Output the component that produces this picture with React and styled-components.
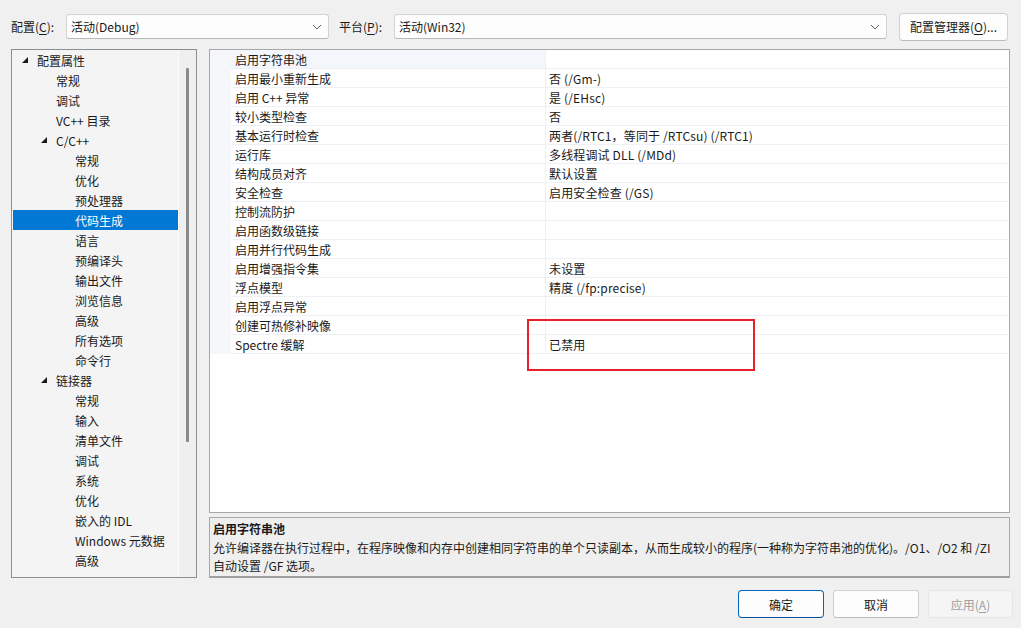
import React from 'react';
import styled, { createGlobalStyle } from 'styled-components';

const GlobalStyle = createGlobalStyle`
  html, body {
    margin: 0;
    padding: 0;
    background: #f0f0f0;
  }
  body {
    font-family: "Noto Sans CJK SC", "Noto Sans", sans-serif;
    font-size: 12px;
    color: #1a1a1a;
  }
`;

const Dialog = styled.div`
  width: 1021px;
  height: 628px;
  background: #f0f0f0;
  display: flex;
  flex-direction: column;
  position: relative;
  overflow: hidden;
`;

const Toolbar = styled.div`
  display: flex;
  align-items: center;
  height: 27px;
  padding: 13px 13px 0 11px;
`;

const Label = styled.span`
  width: ${p => p.width}px;
  margin-left: ${p => p.offset || 0}px;
  flex: none;
  white-space: nowrap;
  u { text-decoration: underline; text-underline-offset: 2px; }
`;

const Combo = styled.div`
  box-sizing: border-box;
  height: 25px;
  width: ${p => (p.width ? `${p.width}px` : 'auto')};
  flex: ${p => (p.width ? 'none' : '1')};
  display: flex;
  align-items: center;
  justify-content: space-between;
  padding: 0 6px 0 4px;
  background: #fdfdfd;
  border: 1px solid #d3d3d3;
  border-bottom-color: #b8b8b8;
  border-radius: 3px;
`;

const Button = styled.button`
  box-sizing: border-box;
  height: 28px;
  width: ${p => p.width}px;
  margin-left: ${p => p.gap || 0}px;
  flex: none;
  font: inherit;
  color: ${p => (p.disabled ? '#a0a0a0' : '#1a1a1a')};
  background: ${p => (p.disabled ? '#f5f5f5' : '#fdfdfd')};
  border: 1px solid ${p => (p.primary ? '#0067c0' : p.disabled ? '#e6e6e6' : '#d0d0d0')};
  border-bottom-color: ${p => (p.primary ? '#0050a0' : p.disabled ? '#e6e6e6' : '#bcbcbc')};
  border-radius: 4px;
  padding: 0;
  u { text-decoration: underline; text-underline-offset: 2px; }
`;

const Main = styled.div`
  display: flex;
  height: 529px;
  margin: 9px 11px 0 11px;
  gap: 12px;
`;

const TreePanel = styled.div`
  box-sizing: border-box;
  width: 186px;
  flex: none;
  display: flex;
  border: 1px solid #8a8f96;
  background: #f4f4f4;
`;

const TreeList = styled.div`
  flex: 1;
  padding-left: 1px;
`;

const TreeRow = styled.div`
  height: 20px;
  display: flex;
  align-items: center;
  padding-left: ${p => 5 + p.level * 19}px;
  background: ${p => (p.selected ? '#0078d4' : 'transparent')};
  color: ${p => (p.selected ? '#ffffff' : '#1a1a1a')};
  white-space: nowrap;
`;

const Toggle = styled.span`
  width: 19px;
  flex: none;
  display: flex;
  align-items: center;
  padding-left: 4px;
  box-sizing: border-box;
`;

const ScrollTrack = styled.div`
  width: 17px;
  flex: none;
  background: #efefef;
  border-left: 1px solid #fafafa;
  display: flex;
  justify-content: center;
  padding-top: 18px;
`;

const ScrollThumb = styled.div`
  width: 3px;
  height: 374px;
  background: #8a8a8a;
  border-radius: 1px;
`;

const RightColumn = styled.div`
  flex: 1;
  display: flex;
  flex-direction: column;
  gap: 4px;
`;

const Grid = styled.div`
  box-sizing: border-box;
  height: 465px;
  border: 1px solid #a8a8a8;
  background: #ffffff;
`;

const PropRow = styled.div`
  display: grid;
  grid-template-columns: 21px 315px 1fr;
  height: 19px;
`;

const Gutter = styled.div`
  background: #f5f7fa;
`;

const NameCell = styled.div`
  padding: 1px 0 0 4px;
  line-height: 17px;
  background: ${p => (p.selected ? '#f3f6fa' : 'transparent')};
  border-right: 1px solid #eef0f4;
  border-bottom: 1px solid #eef0f4;
  white-space: nowrap;
`;

const ValueCell = styled.div`
  padding: 1px 0 0 3px;
  line-height: 17px;
  border-bottom: 1px solid #eef0f4;
  white-space: nowrap;
  letter-spacing: 0.15px;
`;

const Description = styled.div`
  box-sizing: border-box;
  height: 61px;
  border: 1px solid #a8a8a8;
  border-bottom: 2px solid #a0a0a0;
  background: #efefef;
  padding: 2px 3px 0 3px;
  line-height: 18.5px;
`;

const DescTitle = styled.div`
  font-weight: bold;
`;

const Footer = styled.div`
  display: flex;
  justify-content: flex-end;
  margin-top: 12px;
  padding-right: 8px;
`;

const Highlight = styled.div`
  position: absolute;
  left: 527px;
  top: 319px;
  width: 228px;
  height: 52px;
  box-sizing: border-box;
  border: 2px solid #e8202a;
  pointer-events: none;
`;

const Chevron = () => (
  <svg width="10" height="6" viewBox="0 0 10 6">
    <path d="M1 1 L5 5 L9 1" fill="none" stroke="#606060" strokeWidth="1" />
  </svg>
);

const Triangle = () => (
  <svg width="6" height="6" viewBox="0 0 6 6">
    <polygon points="6,0 6,6 0,6" fill="#1a1a1a" />
  </svg>
);

const tree = [
  { label: '配置属性', level: 0, open: true },
  { label: '常规', level: 1 },
  { label: '调试', level: 1 },
  { label: 'VC++ 目录', level: 1 },
  { label: 'C/C++', level: 1, open: true },
  { label: '常规', level: 2 },
  { label: '优化', level: 2 },
  { label: '预处理器', level: 2 },
  { label: '代码生成', level: 2, selected: true },
  { label: '语言', level: 2 },
  { label: '预编译头', level: 2 },
  { label: '输出文件', level: 2 },
  { label: '浏览信息', level: 2 },
  { label: '高级', level: 2 },
  { label: '所有选项', level: 2 },
  { label: '命令行', level: 2 },
  { label: '链接器', level: 1, open: true },
  { label: '常规', level: 2 },
  { label: '输入', level: 2 },
  { label: '清单文件', level: 2 },
  { label: '调试', level: 2 },
  { label: '系统', level: 2 },
  { label: '优化', level: 2 },
  { label: '嵌入的 IDL', level: 2 },
  { label: 'Windows 元数据', level: 2 },
  { label: '高级', level: 2 },
];

const props = [
  ['启用字符串池', ''],
  ['启用最小重新生成', '否 (/Gm-)'],
  ['启用 C++ 异常', '是 (/EHsc)'],
  ['较小类型检查', '否'],
  ['基本运行时检查', '两者(/RTC1，等同于 /RTCsu) (/RTC1)'],
  ['运行库', '多线程调试 DLL (/MDd)'],
  ['结构成员对齐', '默认设置'],
  ['安全检查', '启用安全检查 (/GS)'],
  ['控制流防护', ''],
  ['启用函数级链接', ''],
  ['启用并行代码生成', ''],
  ['启用增强指令集', '未设置'],
  ['浮点模型', '精度 (/fp:precise)'],
  ['启用浮点异常', ''],
  ['创建可热修补映像', ''],
  ['Spectre 缓解', '已禁用'],
];

export default function App() {
  return (
    <Dialog>
      <GlobalStyle />
      <Toolbar>
        <Label width={55}>配置(<u>C</u>):</Label>
        <Combo width={263}>
          <span>活动(Debug)</span>
          <Chevron />
        </Combo>
        <Label width={55} offset={10}>平台(<u>P</u>):</Label>
        <Combo>
          <span>活动(Win32)</span>
          <Chevron />
        </Combo>
        <Button width={109} gap={12}>配置管理器(<u>O</u>)...</Button>
      </Toolbar>

      <Main>
        <TreePanel>
          <TreeList>
            {tree.map((item, i) => (
              <TreeRow key={i} level={item.level} selected={item.selected}>
                <Toggle>{item.open ? <Triangle /> : null}</Toggle>
                <span>{item.label}</span>
              </TreeRow>
            ))}
          </TreeList>
          <ScrollTrack>
            <ScrollThumb />
          </ScrollTrack>
        </TreePanel>

        <RightColumn>
          <Grid>
            {props.map(([name, value], i) => (
              <PropRow key={i}>
                <Gutter />
                <NameCell selected={i === 0}>{name}</NameCell>
                <ValueCell>{value}</ValueCell>
              </PropRow>
            ))}
          </Grid>
          <Description>
            <DescTitle>启用字符串池</DescTitle>
            <div>
              允许编译器在执行过程中，在程序映像和内存中创建相同字符串的单个只读副本，从而生成较小的程序(一种称为字符串池的优化)。/O1、/O2 和 /ZI
              <br />
              自动设置 /GF 选项。
            </div>
          </Description>
        </RightColumn>
      </Main>

      <Footer>
        <Button width={86} primary>确定</Button>
        <Button width={86} gap={9}>取消</Button>
        <Button width={85} gap={9} disabled>应用(<u>A</u>)</Button>
      </Footer>

      <Highlight />
    </Dialog>
  );
}
